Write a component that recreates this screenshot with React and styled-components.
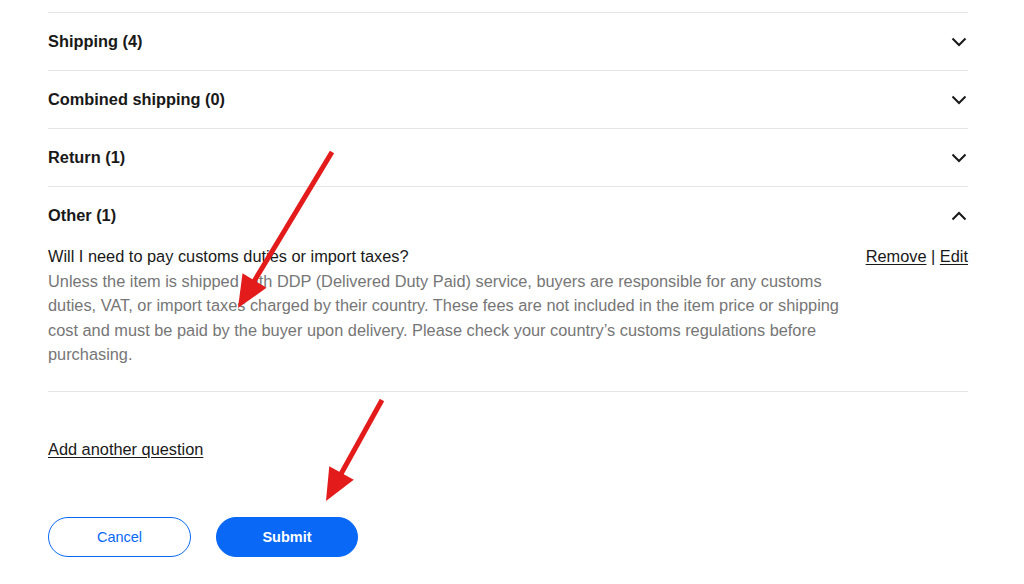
import React from "react";
import styled, { createGlobalStyle } from "styled-components";

const Global = createGlobalStyle`
  html, body { margin: 0; padding: 0; background: #fff; }
  body { font-family: "Liberation Sans", Arial, sans-serif; color: #191919; }
`;

const Page = styled.div`
  position: relative;
  width: 1024px;
  height: 584px;
  overflow: hidden;
  box-sizing: border-box;
  padding: 12px 56px 0 48px;
`;

const Section = styled.section`
  border-top: 1px solid #e5e5e5;
  ${(p) => (p.$open ? "border-bottom: 1px solid #e5e5e5;" : "")}
`;

const Header = styled.div`
  height: 57px;
  display: flex;
  align-items: center;
  justify-content: space-between;
`;

const Title = styled.h3`
  margin: 0;
  font-size: 16.35px;
  font-weight: 700;
  color: #191919;
`;

const Content = styled.div`
  display: flex;
  justify-content: space-between;
  gap: 22px;
  padding-bottom: 24px;
  font-size: 16.35px;
  line-height: 24.5px;
`;

const QA = styled.div`
  flex: 1;
  max-width: 796px;
`;

const Question = styled.div`
  color: #191919;
`;

const Answer = styled.div`
  color: #767676;
`;

const Actions = styled.div`
  white-space: nowrap;
  color: #191919;
`;

const LinkText = styled.a`
  color: #191919;
  text-decoration: underline;
  text-underline-offset: 2px;
  cursor: pointer;
`;

const AddLink = styled(LinkText)`
  display: inline-block;
  margin-top: 45px;
  font-size: 16.35px;
  line-height: 24px;
`;

const ButtonRow = styled.div`
  display: flex;
  gap: 25px;
  margin-top: 56px;
`;

const Button = styled.button`
  height: 40px;
  width: ${(p) => (p.$primary ? "142px" : "143px")};
  border-radius: 20px;
  font-family: "Liberation Sans", Arial, sans-serif;
  font-size: 14.5px;
  font-weight: ${(p) => (p.$primary ? 700 : 400)};
  border: 1px solid #0968f6;
  background: ${(p) => (p.$primary ? "#0968f6" : "#fff")};
  color: ${(p) => (p.$primary ? "#fff" : "#0968f6")};
  cursor: pointer;
`;

const Overlay = styled.svg`
  position: absolute;
  left: 0;
  top: 0;
  pointer-events: none;
`;

const Chevron = ({ up }) => (
  <svg width="16" height="10" viewBox="0 0 16 10" style={{ marginRight: 1 }}>
    <path
      d={up ? "M1.5 8.5 L8 2 L14.5 8.5" : "M1.5 1.5 L8 8 L14.5 1.5"}
      fill="none"
      stroke="#191919"
      strokeWidth="2"
    />
  </svg>
);

const Arrow = ({ x1, y1, x2, y2 }) => {
  const dx = x2 - x1;
  const dy = y2 - y1;
  const len = Math.hypot(dx, dy);
  const ux = dx / len;
  const uy = dy / len;
  const hl = 32;
  const hw = 14;
  const bx = x2 - ux * hl;
  const by = y2 - uy * hl;
  const px = -uy;
  const py = ux;
  const pts = `${x2},${y2} ${bx + px * hw},${by + py * hw} ${bx - px * hw},${by - py * hw}`;
  return (
    <g>
      <line x1={x1} y1={y1} x2={bx + ux * 4} y2={by + uy * 4} stroke="#e31b1b" strokeWidth="5" strokeLinecap="butt" />
      <polygon points={pts} fill="#e31b1b" />
    </g>
  );
};

const sections = [
  { title: "Shipping (4)" },
  { title: "Combined shipping (0)" },
  { title: "Return (1)" },
];

export default function App() {
  return (
    <>
      <Global />
      <Page>
        {sections.map((s) => (
          <Section key={s.title}>
            <Header>
              <Title>{s.title}</Title>
              <Chevron />
            </Header>
          </Section>
        ))}
        <Section $open>
          <Header>
            <Title>Other (1)</Title>
            <Chevron up />
          </Header>
          <Content>
            <QA>
              <Question>Will I need to pay customs duties or import taxes?</Question>
              <Answer>
                Unless the item is shipped with DDP (Delivered Duty Paid) service, buyers are
                responsible for any customs duties, VAT, or import taxes charged by their country.
                These fees are not included in the item price or shipping cost and must be paid by
                the buyer upon delivery. Please check your country’s customs regulations before
                purchasing.
              </Answer>
            </QA>
            <Actions>
              <LinkText>Remove</LinkText> | <LinkText>Edit</LinkText>
            </Actions>
          </Content>
        </Section>
        <AddLink>Add another question</AddLink>
        <ButtonRow>
          <Button>Cancel</Button>
          <Button $primary>Submit</Button>
        </ButtonRow>
        <Overlay width="1024" height="584">
          <Arrow x1={332} y1={152} x2={238} y2={308} />
          <Arrow x1={382} y1={400} x2={326} y2={501} />
        </Overlay>
      </Page>
    </>
  );
}
